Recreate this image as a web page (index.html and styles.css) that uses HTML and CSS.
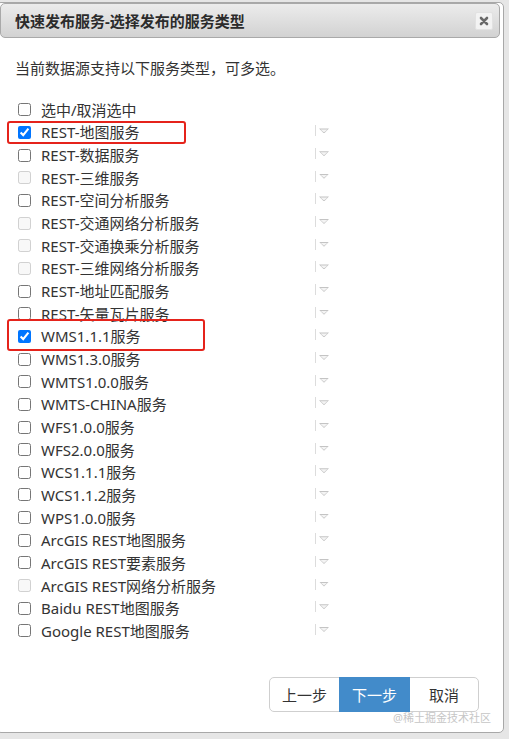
FILE: index.html
```html
<!DOCTYPE html>
<html lang="zh-CN">
<head>
    <meta charset="UTF-8" />
    <meta name="viewport" content="width=device-width, initial-scale=1.0" />
    <title>快速发布服务</title>
    <link rel="stylesheet" href="styles.css">
</head>
<body>
    <div class="dialog">
        <div class="titlebar">
            <span class="title">快速发布服务-选择发布的服务类型</span>
            <button class="closeBtn" title="关闭">
                <svg width="10" height="10" viewBox="0 0 10 10"><path d="M2 2L8 8M8 2L2 8" stroke="#6a6a6a" stroke-width="2.6" stroke-linecap="round"/></svg>
            </button>
        </div>

        <div class="content">
            <p class="desc">当前数据源支持以下服务类型，可多选。</p>
            <div class="list">
                <div class="row all">
                    <input type="checkbox" id="selAll" />
                    <label for="selAll">选中/取消选中</label>
                </div>
                <div class="row"><input type="checkbox" checked /><label>REST-地图服务</label><span class="sel"><i></i></span></div>
                <div class="row"><input type="checkbox" /><label>REST-数据服务</label><span class="sel"><i></i></span></div>
                <div class="row"><input type="checkbox" disabled /><label>REST-三维服务</label><span class="sel"><i></i></span></div>
                <div class="row"><input type="checkbox" /><label>REST-空间分析服务</label><span class="sel"><i></i></span></div>
                <div class="row"><input type="checkbox" disabled /><label>REST-交通网络分析服务</label><span class="sel"><i></i></span></div>
                <div class="row"><input type="checkbox" disabled /><label>REST-交通换乘分析服务</label><span class="sel"><i></i></span></div>
                <div class="row"><input type="checkbox" disabled /><label>REST-三维网络分析服务</label><span class="sel"><i></i></span></div>
                <div class="row"><input type="checkbox" /><label>REST-地址匹配服务</label><span class="sel"><i></i></span></div>
                <div class="row"><input type="checkbox" /><label>REST-矢量瓦片服务</label><span class="sel"><i></i></span></div>
                <div class="row"><input type="checkbox" checked /><label>WMS1.1.1服务</label><span class="sel"><i></i></span></div>
                <div class="row"><input type="checkbox" /><label>WMS1.3.0服务</label><span class="sel"><i></i></span></div>
                <div class="row"><input type="checkbox" /><label>WMTS1.0.0服务</label><span class="sel"><i></i></span></div>
                <div class="row"><input type="checkbox" /><label>WMTS-CHINA服务</label><span class="sel"><i></i></span></div>
                <div class="row"><input type="checkbox" /><label>WFS1.0.0服务</label><span class="sel"><i></i></span></div>
                <div class="row"><input type="checkbox" /><label>WFS2.0.0服务</label><span class="sel"><i></i></span></div>
                <div class="row"><input type="checkbox" /><label>WCS1.1.1服务</label><span class="sel"><i></i></span></div>
                <div class="row"><input type="checkbox" /><label>WCS1.1.2服务</label><span class="sel"><i></i></span></div>
                <div class="row"><input type="checkbox" /><label>WPS1.0.0服务</label><span class="sel"><i></i></span></div>
                <div class="row"><input type="checkbox" /><label>ArcGIS REST地图服务</label><span class="sel"><i></i></span></div>
                <div class="row"><input type="checkbox" /><label>ArcGIS REST要素服务</label><span class="sel"><i></i></span></div>
                <div class="row"><input type="checkbox" disabled /><label>ArcGIS REST网络分析服务</label><span class="sel"><i></i></span></div>
                <div class="row"><input type="checkbox" /><label>Baidu REST地图服务</label><span class="sel"><i></i></span></div>
                <div class="row"><input type="checkbox" /><label>Google REST地图服务</label><span class="sel"><i></i></span></div>
            </div>
        </div>

        <div class="footer">
            <button class="btn">上一步</button>
            <button class="btn primary">下一步</button>
            <button class="btn">取消</button>
        </div>

        <div class="mark mark1"></div>
        <div class="mark mark2"></div>
        <div class="watermark">@稀土掘金技术社区</div>
    </div>
</body>
</html>
```

FILE: styles.css
```css
* {
    margin: 0;
    padding: 0;
    box-sizing: border-box;
    font-family: "Noto Sans", "Noto Sans CJK SC", sans-serif;
}

body {
    background-color: #e6e6e6;
    height: 100vh;
    overflow: hidden;
}

.dialog {
    position: relative;
    width: 508px;
    margin: 2px 0 0 -4px;
    padding: 0 3px 20px 3px;
    background-color: #fff;
    border: 1px solid #a8a8a8;
    border-radius: 5px;
}

.titlebar {
    display: flex;
    align-items: center;
    justify-content: space-between;
    height: 35px;
    padding: 0 6px 0 14px;
    border: 1px solid #a9a9a9;
    border-radius: 5px;
    background: linear-gradient(#ececec, #d2d2d2);
}

.title {
    font-size: 15px;
    font-weight: bold;
    color: #2b2b2b;
}

.closeBtn {
    width: 18px;
    height: 18px;
    display: flex;
    align-items: center;
    justify-content: center;
    border: 1px solid #e2e2e2;
    border-radius: 2px;
    background-color: #f3f3f3;
}

.content {
    padding: 0 0 0 15px;
}

.desc {
    margin-top: 19px;
    font-size: 15px;
    line-height: 22px;
    color: #333;
}

.list {
    margin-top: 19px;
}

.row {
    display: flex;
    align-items: center;
    height: 22.67px;
}

.row input[type="checkbox"] {
    width: 13px;
    height: 13px;
    margin: 1px 0 0 3px;
    flex: none;
}

.row label {
    flex: 0 0 274px;
    margin-left: 10px;
    font-size: 15px;
    color: #333;
    white-space: nowrap;
}

.sel {
    display: flex;
    align-items: center;
    height: 11px;
    margin-top: -2px;
    border-left: 1px solid #dcdcdc;
}

.sel i {
    display: block;
    width: 10px;
    height: 5px;
    margin-left: 3px;
    background-color: #c4c4c4;
    clip-path: polygon(0 0, 100% 0, 50% 100%);
    position: relative;
}

.sel i::after {
    content: "";
    position: absolute;
    left: 1.5px;
    top: 1px;
    width: 7px;
    height: 3px;
    background-color: #f4f4f4;
    clip-path: polygon(0 0, 100% 0, 50% 100%);
}

.footer {
    display: flex;
    justify-content: flex-end;
    margin-top: 35px;
    padding-right: 21px;
}

.btn {
    width: 71px;
    height: 35px;
    margin-left: -1px;
    font-size: 15px;
    color: #333;
    background-color: #fff;
    border: 1px solid #cfcfcf;
}

.btn:first-child {
    border-radius: 5px 0 0 5px;
}

.btn:last-child {
    width: 70px;
    border-radius: 0 5px 5px 0;
}

.btn.primary {
    color: #fff;
    background-color: #428bca;
    border-color: #428bca;
    position: relative;
}

.mark {
    position: absolute;
    border: 2px solid #e5231b;
    border-radius: 3px;
}

.mark1 {
    left: 10px;
    top: 118px;
    width: 179px;
    height: 23px;
}

.mark2 {
    left: 10px;
    top: 316px;
    width: 198px;
    height: 32px;
}

.watermark {
    position: absolute;
    right: 12px;
    top: 706px;
    font-size: 11px;
    color: #c6c6c6;
}
```
